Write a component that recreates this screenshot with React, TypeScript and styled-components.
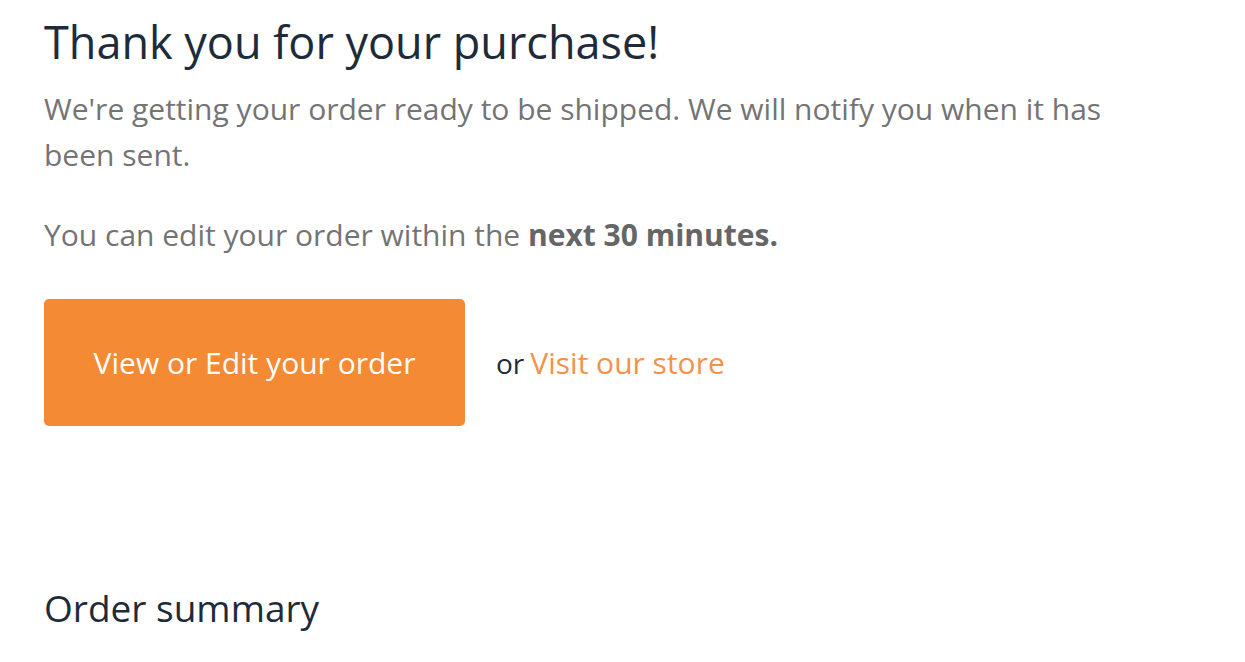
import React from "react";
import styled, { createGlobalStyle } from "styled-components";

const GlobalStyle = createGlobalStyle`
  html, body { margin: 0; padding: 0; background: #ffffff; }
  body { font-family: "Open Sans", "Noto Sans", sans-serif; }
`;

const Page = styled.main`
  padding: 13px 44px 0 44px;
  max-width: 1085px;
`;

const Title = styled.h1`
  margin: 0;
  font-size: 45px;
  font-weight: 400;
  line-height: 57px;
  color: #1d2b3a;
`;

const Text = styled.p<{ $gap: number }>`
  margin: ${(p) => p.$gap}px 0 0 0;
  font-size: 30px;
  line-height: 46px;
  color: #747474;
  b { font-weight: 700; color: #666666; }
`;

const Actions = styled.div`
  display: flex;
  align-items: center;
  gap: 31px;
  margin-top: 41px;
`;

const Button = styled.a`
  display: flex;
  align-items: center;
  justify-content: center;
  width: 421px;
  height: 127px;
  border-radius: 5px;
  background: #f58a35;
  color: #ffffff;
  font-size: 30px;
  text-decoration: none;
`;

const Alt = styled.span`
  font-size: 28px;
  color: #1d2b3a;
`;

const Link = styled.a`
  color: #f5924a;
  font-size: 30px;
  text-decoration: none;
  margin-left: 6px;
`;

const Subtitle = styled.h2`
  margin: 158px 0 0 0;
  font-size: 37px;
  font-weight: 400;
  line-height: 48px;
  color: #1d2b3a;
`;

export default function App() {
  return (
    <>
      <GlobalStyle />
      <Page>
        <Title>Thank you for your purchase!</Title>
        <Text $gap={16}>
          We're getting your order ready to be shipped. We will notify you when it has been sent.
        </Text>
        <Text $gap={34}>
          You can edit your order within the <b>next 30 minutes.</b>
        </Text>
        <Actions>
          <Button href="#">View or Edit your order</Button>
          <Alt>
            or<Link href="#">Visit our store</Link>
          </Alt>
        </Actions>
        <Subtitle>Order summary</Subtitle>
      </Page>
    </>
  );
}
